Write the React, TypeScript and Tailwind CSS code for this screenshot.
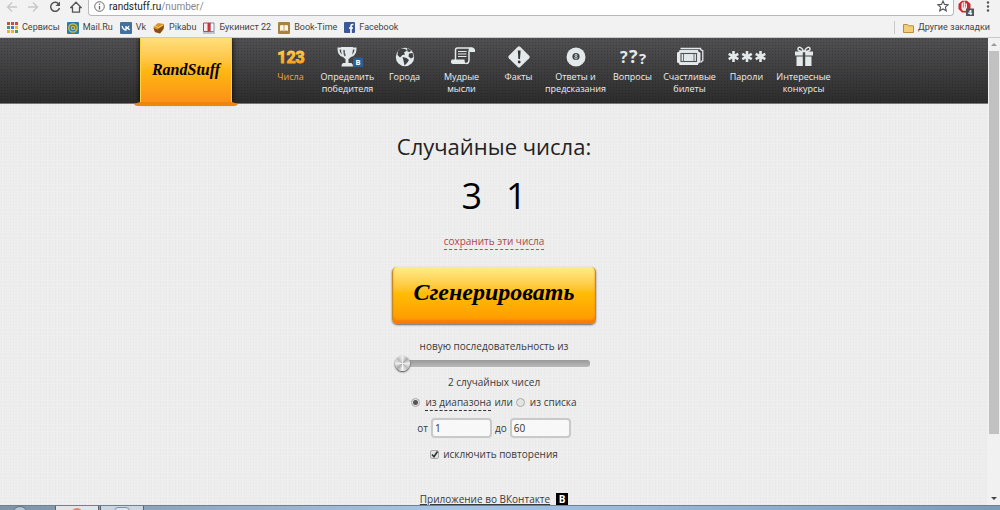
import React, { useState } from "react";

interface NavItem {
  lines: string[];
  icon: React.ReactNode;
  active?: boolean;
}

interface Bookmark {
  title: string;
  icon: React.ReactNode;
}

const bookmarks: Bookmark[] = [
  {
    title: "Сервисы",
    icon: (
      <svg className="size-[11px]" viewBox="0 0 11 11">
        <path fill="#d9473a" d="M0 0h3v3H0zM4 0h3v3H4zM8 0h3v3H8z" />
        <path fill="#46a05a" d="M0 4h3v3H0zM8 8h3v3H8z" />
        <path fill="#3f7bd9" d="M4 4h3v3H4z" />
        <path fill="#edb32c" d="M8 4h3v3H8zM0 8h3v3H0zM4 8h3v3H4z" />
        <path stroke="#f2f2f2" strokeWidth="1" d="M3.500 0v11M7.500 0v11M0 3.500h11M0 7.500h11" />
      </svg>
    ),
  },
  {
    title: "Mail.Ru",
    icon: (
      <svg className="size-3" viewBox="0 0 12 12" fill="none">
        <rect width="12" height="12" rx="1" fill="#2b7da8" />
        <circle cx="6" cy="6" r="4.200" stroke="#e0bd3a" strokeWidth="1.300" />
        <circle cx="6" cy="6" r="1.700" stroke="#e0bd3a" strokeWidth="1.200" />
        <path d="M7.700 5v2c.2 1 1.500 1 2 0" stroke="#e0bd3a" />
      </svg>
    ),
  },
  {
    title: "Vk",
    icon: (
      <svg className="size-3" viewBox="0 0 12 12" fill="none">
        <rect width="12" height="12" rx="1" fill="#44709f" />
        <path d="M2 4c.8 2.500 2 4 4 4V4M6 6c1.500 0 2.500-1 3-2M6.500 6c1.500 0 2.500 1 3.200 2" stroke="#fff" strokeWidth="1.300" />
      </svg>
    ),
  },
  {
    title: "Pikabu",
    icon: (
      <svg className="size-3" viewBox="0 0 12 12">
        <path d="M1 4.500 5 1l6 1-.5 5L7 11.500 2 10 .5 6z" fill="#d9932a" />
        <path d="m.5 6 4 1.500L11 3l-.5 4L7 11.500 2 10z" fill="#8a4d16" />
        <path d="m2 4 3.500 1.500L10 3" stroke="#f6cf6c" fill="none" />
      </svg>
    ),
  },
  {
    title: "Букинист 22",
    icon: (
      <svg className="size-3" viewBox="0 0 12 12">
        <path d="M.5 1H5v8.500H.5z" fill="#f6e9ea" stroke="#b9474c" />
        <path d="M7 1h4v8.500H7z" fill="#fff" stroke="#7b8aa5" />
        <path d="M5 .5h2.500v10L6 9.500l-1 1z" fill="#c8323c" />
        <path d="M0 11h12" stroke="#8d97ab" />
      </svg>
    ),
  },
  {
    title: "Book-Time",
    icon: (
      <svg className="size-3" viewBox="0 0 12 12">
        <rect width="12" height="12" rx="1" fill="#a9823f" />
        <path d="M2 3.500c1.500-.7 3-.7 4 .2 1-.9 2.500-.9 4-.2V9c-1.500-.6-3-.6-4 .2C5 8.400 3.500 8.400 2 9z" fill="#fff7e2" />
        <path d="M6 4v5" stroke="#a9823f" strokeWidth=".7" />
      </svg>
    ),
  },
  {
    title: "Facebook",
    icon: (
      <svg className="size-[11px]" viewBox="0 0 11 11" fill="none">
        <rect width="11" height="11" rx="1" fill="#3b5998" />
        <path d="M9.500 2.500h-1C7.500 2.500 7 3 7 4v7M5 6h4" stroke="#fff" strokeWidth="1.600" />
      </svg>
    ),
  },
];

const navItems: NavItem[] = [
  {
    lines: ["Числа"],
    active: true,
    icon: (
      <svg className="h-6 w-8" viewBox="0 0 32 24">
        <defs>
          <linearGradient id="digits" x1="0" y1="0" x2="0" y2="1">
            <stop offset="0" stopColor="#ffd84a" />
            <stop offset="1" stopColor="#f59a12" />
          </linearGradient>
        </defs>
        <text
          x="16"
          y="18"
          textAnchor="middle"
          fontSize="16"
          fontWeight="bold"
          fontFamily="Roboto, sans-serif"
          fill="url(#digits)"
          stroke="url(#digits)"
          strokeWidth=".9"
        >
          123
        </text>
      </svg>
    ),
  },
  {
    lines: ["Определить", "победителя"],
    icon: (
      <svg className="h-6 w-8" viewBox="0 0 32 24" fill="none">
        <path d="M10 3.500H6.500c0 4 1.500 7 5 7.500M20 3.500h3.500c0 4-1.500 7-5 7.500" stroke="#e3e8ea" strokeWidth="2" />
        <path d="M9 2h12c0 6-1 10.500-4.500 12v4H19c1 0 2 1.500 2 3.500H9.500c0-2 .8-3.500 2-3.500h2v-4C10 12.500 9 8 9 2z" fill="#e3e8ea" />
        <path d="M12 5c0 2.500.3 4.500 1.200 6" stroke="#55595c" strokeWidth="1.500" />
        <rect x="21" y="12.500" width="10" height="9.500" rx="1" fill="#2d5f9b" />
        <text x="26" y="20" fontSize="8" fontWeight="bold" textAnchor="middle" fontFamily="Open Sans, sans-serif" fill="#fff">
          в
        </text>
      </svg>
    ),
  },
  {
    lines: ["Города"],
    icon: (
      <svg className="h-6 w-8" viewBox="0 0 32 24">
        <circle cx="16" cy="12" r="9.200" fill="#e3e8ea" />
        <path d="m9 6 3-2.500 4 .5 2 1.500-3 2 1 2-2.500.5L11 12.500 8.500 10z" fill="#3f4042" />
        <path d="m18 3 4 2.500-1 1.500-2.500-.5zM13.500 12l4 1 2.500 2-2 3-2.500 2.500-.8-4z" fill="#3f4042" />
        <path d="m20 8.500 3.500-.5 1 4-2.500 1.500-2.500-2z" fill="#3f4042" />
      </svg>
    ),
  },
  {
    lines: ["Мудрые", "мысли"],
    icon: (
      <svg className="h-6 w-8" viewBox="0 0 32 24" fill="none">
        <path d="M9.500 15V5c0-1.500.5-2 2-2H25c-2 1-2 2-2 4v8c0 2-1 3.500-3 3.500" stroke="#e3e8ea" strokeWidth="1.500" />
        <path d="M24.500 2.200c3.500 0 5 1.500 4.500 4.800h-5c0-2-.2-3.500.5-4.800z" fill="#e3e8ea" />
        <path d="M6 14.500h12.500c0 2 .5 4 2.500 4.500H7c-2.500 0-2.500-3-1-4.500z" fill="#e3e8ea" />
        <path d="M12 6.500h8.500M12 9h8.500M12 11.500h8.500" stroke="#e3e8ea" strokeWidth="1.200" />
      </svg>
    ),
  },
  {
    lines: ["Факты"],
    icon: (
      <svg className="h-6 w-8" viewBox="0 0 32 24">
        <path d="M14.800 1.800q1.200-1 2.400 0l9 9q1 1.200 0 2.400l-9 8.800q-1.200 1-2.400 0l-9-8.800q-1-1.200 0-2.400z" fill="#e3e8ea" />
        <path d="M14.800 5.500h2.800L17 14h-1.600z" fill="#333" />
        <circle cx="16.200" cy="17" r="1.400" fill="#333" />
      </svg>
    ),
  },
  {
    lines: ["Ответы и", "предсказания"],
    icon: (
      <svg className="h-6 w-8" viewBox="0 0 32 24" fill="none">
        <circle cx="16" cy="12" r="9.500" fill="#e3e8ea" />
        <circle cx="16" cy="11.500" r="3.600" fill="#404244" />
        <circle cx="16" cy="10.300" r="1" stroke="#e3e8ea" strokeWidth=".8" />
        <circle cx="16" cy="12.700" r="1.200" stroke="#e3e8ea" strokeWidth=".8" />
      </svg>
    ),
  },
  {
    lines: ["Вопросы"],
    icon: (
      <svg className="h-6 w-8" viewBox="0 0 32 24" fontFamily="Open Sans, sans-serif" fontWeight="bold" fill="#e3e8ea">
        <text x="3" y="18" fontSize="16">?</text>
        <text x="12" y="18" fontSize="18">?</text>
        <text x="22" y="19" fontSize="15">?</text>
      </svg>
    ),
  },
  {
    lines: ["Счастливые", "билеты"],
    icon: (
      <svg className="h-6 w-8" viewBox="0 0 32 24" fill="none">
        <path d="M6.500 3.500h20c0 1.300.8 2 2.300 2.200v10c-1 .3-1.500.8-2 1.800" stroke="#e3e8ea" strokeWidth="1.300" />
        <path d="M5.500 5h18.500c0 1.500 1 2.500 2.500 2.500v10c-1.500 0-2.500 1-2.500 2.500H5.500c0-1.500-1-2.500-2.500-2.500v-10C4.500 7.500 5.500 6.500 5.500 5z" fill="#e3e8ea" />
        <rect x="7" y="8.500" width="15.500" height="8" stroke="#505254" strokeWidth="1.100" />
        <path d="M9.500 8.500v8M20 8.500v8" stroke="#505254" strokeWidth=".8" />
      </svg>
    ),
  },
  {
    lines: ["Пароли"],
    icon: (
      <svg className="h-6 w-10" viewBox="0 0 40 24" fill="none" stroke="#e3e8ea" strokeWidth="2.600">
        <path d="M6.500 6v11M1.700 8.800l9.600 5.400M11.300 8.800l-9.600 5.400" />
        <path d="M20 6v11M15.200 8.800l9.600 5.400M24.800 8.800l-9.600 5.400" />
        <path d="M33.500 6v11M28.700 8.800l9.600 5.400M38.300 8.800l-9.600 5.400" />
      </svg>
    ),
  },
  {
    lines: ["Интересные", "конкурсы"],
    icon: (
      <svg className="h-6 w-8" viewBox="0 0 32 24">
        <path d="M7 6.500h7.800v4H7zM17.200 6.500H25v4h-7.800zM8.500 11.500h6.300v9.500H8.500zM17.200 11.500h6.300v9.500h-6.300z" fill="#e3e8ea" />
        <path d="M15.500 6.500c-4 0-6-1-5.500-3 .8-2.500 4.500-1 5.500 3zM16.500 6.500c4 0 6-1 5.500-3-.8-2.500-4.500-1-5.500 3z" fill="none" stroke="#e3e8ea" strokeWidth="1.500" />
      </svg>
    ),
  },
];

const BrowserBar = () => (
  <div className="shrink-0 bg-[#f2f2f2] font-[Roboto,sans-serif] text-[#444]">
    <div className="flex h-4 items-start pr-2 pl-[6px]">
      <div className="flex h-[13px] w-[76px] items-center justify-between">
        <button aria-label="Назад">
          <svg className="size-3" viewBox="0 0 12 12" fill="none" stroke="#c8c8c8" strokeWidth="1.400">
            <path d="M11 6H2M6 1.500 1.500 6 6 10.500" />
          </svg>
        </button>
        <button aria-label="Вперёд">
          <svg className="size-3" viewBox="0 0 12 12" fill="none" stroke="#c8c8c8" strokeWidth="1.400">
            <path d="M1 6h9M6 1.500 10.500 6 6 10.500" />
          </svg>
        </button>
        <button aria-label="Обновить">
          <svg className="size-3" viewBox="0 0 12 12" fill="none" stroke="#555" strokeWidth="1.500">
            <path d="M10 3.500A4.500 4.500 0 1 0 10.500 7" />
            <path d="M11 .5v4.500H6.500z" fill="#555" stroke="none" />
          </svg>
        </button>
        <button aria-label="Домой">
          <svg className="size-3" viewBox="0 0 12 12" fill="none" stroke="#555" strokeWidth="1.300">
            <path d="M.8 6.500 6 1.200l5.200 5.300H9.500v4.700h-7V6.500z" />
          </svg>
        </button>
      </div>
      <div className="ml-[6px] flex h-4 flex-1 items-start rounded-b-sm border border-t-0 border-[#b8b8b8] bg-white pr-1 pl-[5px]">
        <svg className="mt-px mr-1 size-[11px] shrink-0" viewBox="0 0 11 11" fill="none" stroke="#666">
          <circle cx="5.500" cy="5.500" r="4.800" />
          <path d="M5.500 5v3.500M5.500 2.500v1.200" strokeWidth="1.300" />
        </svg>
        <span className="flex-1 text-[10px] leading-[13px] text-[#888]">
          <span className="text-[#222]">randstuff.ru</span>/number/
        </span>
        <button aria-label="Добавить в закладки">
          <svg className="size-3" viewBox="0 0 12 12" fill="none" stroke="#555" strokeWidth="1.100">
            <path d="m6 1 1.500 3.400 3.700.3-2.800 2.500.9 3.600L6 8.900l-3.300 1.900.9-3.600L.8 4.700l3.700-.3z" />
          </svg>
        </button>
      </div>
      <button aria-label="Расширение" className="ml-1">
        <svg className="h-4 w-[18px]" viewBox="0 0 18 16">
          <path d="M4 .8h5L12.500 4v5L9 12.500H4L.5 9V4z" fill="#c9282d" />
          <path d="M3.500 3.500 5 2v5.500h.5V1.500H7v6h.5V2.500L9 4v5L7.500 11H5L3.500 9z" fill="#f7e4e4" />
          <rect x="8" y="8.500" width="8" height="7.500" fill="#555" />
          <text x="12" y="15" fontSize="7" fontWeight="bold" textAnchor="middle" fontFamily="Roboto, sans-serif" fill="#fff">
            4
          </text>
        </svg>
      </button>
      <button aria-label="Меню" className="ml-2">
        <svg className="h-[13px] w-2" viewBox="0 0 8 13" fill="#555">
          <circle cx="4" cy="2.500" r="1.200" />
          <circle cx="4" cy="6.500" r="1.200" />
          <circle cx="4" cy="10.500" r="1.200" />
        </svg>
      </button>
    </div>
    <div className="flex h-[22px] items-center border-b border-[#c9c9c9] pt-[2px] pr-[10px] pl-[7px] text-[9px]">
      <div className="flex flex-1 items-center gap-[7px]">
        {bookmarks.map((b) => (
          <a key={b.title} href="#" className="flex items-center gap-1 whitespace-nowrap">
            {b.icon}
            {b.title}
          </a>
        ))}
      </div>
      <a href="#" className="flex items-center gap-1 border-l border-[#c9c9c9] pl-2 whitespace-nowrap">
        <svg className="h-[10px] w-[11px]" viewBox="0 0 11 10">
          <path d="M.5 9.500v-8h4l1 1.300h5v6.700z" fill="#f3cd78" stroke="#bd8d3c" />
        </svg>
        Другие закладки
      </a>
    </div>
  </div>
);

const Header = () => (
  <header className="h-[66px] border-b border-[#777] bg-[radial-gradient(circle,rgba(0,0,0,0.2)_1px,transparent_1px),linear-gradient(#505052,#2c2c2d)] bg-size-[3px_3px,100%_100%]">
    <div className="mx-auto flex max-w-[720px] items-start">
      <a href="#" className="block w-[104px] shrink-0">
        <span className="mx-[6px] flex h-16 items-center justify-center border-x border-[#ffd23c] bg-linear-to-b from-[#ffdf7c] via-[#ffb911] to-[#fb9018] font-['Liberation_Serif',serif] text-base font-bold text-black italic shadow-[0_0_5px_#000]">
          RandStuff
        </span>
        <svg className="relative block h-1 w-full" viewBox="0 0 104 4" preserveAspectRatio="none">
          <path d="M6 0h92l6 2q-1 2-4 2H4Q1 4 0 2z" fill="#ef8608" />
        </svg>
      </a>
      <nav className="ml-6 flex">
        {navItems.map((item) => (
          <a
            key={item.lines[0]}
            href="#"
            className={`flex w-[57px] flex-col items-center pt-[7px] text-center font-['Open_Sans',sans-serif] text-[9px] leading-3 whitespace-nowrap ${
              item.active ? "text-[#f0a33c]" : "text-[#eee]"
            }`}
          >
            {item.icon}
            <span className="mt-[2px] flex flex-col items-center">
              {item.lines.map((line) => (
                <span key={line}>{line}</span>
              ))}
            </span>
          </a>
        ))}
      </nav>
    </div>
  </header>
);

const radioClass =
  "size-[9px] appearance-none rounded-full border border-[#aaa] bg-[#e4e4e4] checked:bg-[radial-gradient(circle,#555_2px,#e4e4e4_3px)]";
const fieldClass =
  "ml-[3px] h-5 w-[61px] rounded-[4px] border-2 border-[#c9c9c9] bg-[#f8f8f8] px-[2px] text-[10px] text-[#333] outline-none";

const Generator = () => {
  const [count, setCount] = useState(2);
  const [source, setSource] = useState("range");
  const [unique, setUnique] = useState(true);

  return (
    <main className="flex flex-col items-center pt-7 text-[10px] leading-4 text-[#3a3a3a]">
      <h1 className="text-[22px] leading-7 text-[#222]">Случайные числа:</h1>
      <div className="mt-[14px] flex gap-6 text-4xl leading-[44px] text-black">
        <span>3</span>
        <span>1</span>
      </div>
      <a href="#" className="mt-4 border-b border-dashed border-[#b94a4f] leading-[15px] text-[#b0444a]">
        сохранить эти числа
      </a>
      <button className="mt-[17px] h-[57px] w-[204px] rounded-[5px] border-x border-[#c98a1d] bg-linear-to-b from-[#ffed86] via-[#ffbd05] via-45% to-[#ff9600] pb-2 font-['Liberation_Serif',serif] text-2xl leading-8 font-bold text-black italic shadow-[inset_0_-4px_2px_#f87b0a,0_1px_2px_#666]">
        Сгенерировать
      </button>
      <label htmlFor="count" className="mt-[14px]">
        новую последовательность из
      </label>
      <input
        id="count"
        type="range"
        min={2}
        max={50}
        value={count}
        onChange={(e) => setCount(Number(e.target.value))}
        className="mt-px mr-1 h-4 w-[195px] appearance-none bg-transparent [&::-webkit-slider-runnable-track]:h-[7px] [&::-webkit-slider-runnable-track]:rounded-[3px] [&::-webkit-slider-runnable-track]:bg-linear-to-b [&::-webkit-slider-runnable-track]:from-[#999] [&::-webkit-slider-runnable-track]:to-[#bababa] [&::-webkit-slider-thumb]:-mt-1 [&::-webkit-slider-thumb]:size-[15px] [&::-webkit-slider-thumb]:appearance-none [&::-webkit-slider-thumb]:rounded-full [&::-webkit-slider-thumb]:bg-[conic-gradient(#eee,#aaa,#eee,#bbb,#f4f4f4,#aaa,#eee,#bbb,#eee)] [&::-webkit-slider-thumb]:shadow-[0_1px_2px_#333]"
      />
      <p className="mt-[3px]">{count} случайных чисел</p>
      <div className="mt-[3px] flex items-center">
        <input
          id="range"
          type="radio"
          name="source"
          checked={source === "range"}
          onChange={() => setSource("range")}
          className={radioClass}
        />
        <label htmlFor="range" className="mr-[3px] ml-[5px] border-b border-dashed border-[#333] pt-px">
          из диапазона
        </label>
        или
        <input
          id="list"
          type="radio"
          name="source"
          checked={source === "list"}
          onChange={() => setSource("list")}
          className={`ml-[3px] ${radioClass}`}
        />
        <label htmlFor="list" className="ml-[5px]">
          из списка
        </label>
      </div>
      <div className="mt-[7px] flex items-center">
        <label htmlFor="from">от</label>
        <input id="from" type="text" defaultValue="1" className={fieldClass} />
        <label htmlFor="to" className="ml-[3px]">
          до
        </label>
        <input id="to" type="text" defaultValue="60" className={fieldClass} />
      </div>
      <div className="mt-2 flex items-center gap-1">
        <span className="relative flex">
          <input
            id="unique"
            type="checkbox"
            checked={unique}
            onChange={(e) => setUnique(e.target.checked)}
            className="size-[9px] appearance-none rounded-[2px] border border-[#aaa] bg-[#e4e4e4]"
          />
          {unique && (
            <svg className="pointer-events-none absolute inset-0 size-[9px]" viewBox="0 0 9 9" fill="none">
              <path d="m2 4.500 2 2.200L7.500 1.500" stroke="#333" strokeWidth="1.700" />
            </svg>
          )}
        </span>
        <label htmlFor="unique">исключить повторения</label>
      </div>
      <a href="#" className="mt-[29px] flex items-center gap-[6px]">
        <span className="underline">Приложение во ВКонтакте</span>
        <span className="flex size-3 items-center justify-center bg-black text-[10px] leading-3 font-bold text-white">
          B
        </span>
      </a>
    </main>
  );
};

const Scrollbar = () => (
  <div className="flex w-3 shrink-0 flex-col items-center bg-[#f1f1f1] py-1">
    <svg className="h-[5px] w-[6px]" viewBox="0 0 6 5" fill="#999">
      <path d="m3 1 3 3H0z" />
    </svg>
    <div className="mt-1 h-5/6 w-[10px] bg-[#c1c1c1]" />
    <svg className="mt-auto h-[5px] w-[6px]" viewBox="0 0 6 5" fill="#444">
      <path d="M0 1h6L3 4z" />
    </svg>
  </div>
);

const Taskbar = () => (
  <div className="flex h-[5px] shrink-0 overflow-hidden border-t border-[#6f8292] bg-linear-to-r from-[#8093a5] via-[#a9c6e8] via-45% to-[#7c9bbb]">
    <svg className="ml-2 h-4 w-6" viewBox="0 0 24 16">
      <circle cx="12" cy="8" r="7.500" fill="#b5c7d6" stroke="#5f7183" />
    </svg>
    <div className="ml-[23px] flex w-11 justify-center border-x border-[#56636f] bg-[#e5e5e7]">
      <svg className="mt-[2px] h-3 w-3" viewBox="0 0 12 12">
        <circle cx="6" cy="6" r="6" fill="#e28476" />
      </svg>
    </div>
    <div className="ml-px flex w-11 justify-center border-x border-[#56636f] bg-[#cbd6e2]">
      <div className="mt-px h-3 w-4 rounded-sm border border-[#7d91a8] bg-[#dde5ec]" />
    </div>
  </div>
);

export default function App() {
  return (
    <div className="flex h-screen flex-col overflow-hidden">
      <BrowserBar />
      <div className="flex min-h-0 flex-1">
        <div className="flex-1 overflow-hidden bg-[#ededed] bg-[radial-gradient(circle,rgba(0,0,0,0.03)_1px,transparent_1px),radial-gradient(circle,rgba(255,255,255,0.3)_1px,transparent_1px)] bg-size-[3px_3px,5px_4px] font-['Open_Sans',sans-serif]">
          <Header />
          <Generator />
        </div>
        <Scrollbar />
      </div>
      <Taskbar />
    </div>
  );
}
